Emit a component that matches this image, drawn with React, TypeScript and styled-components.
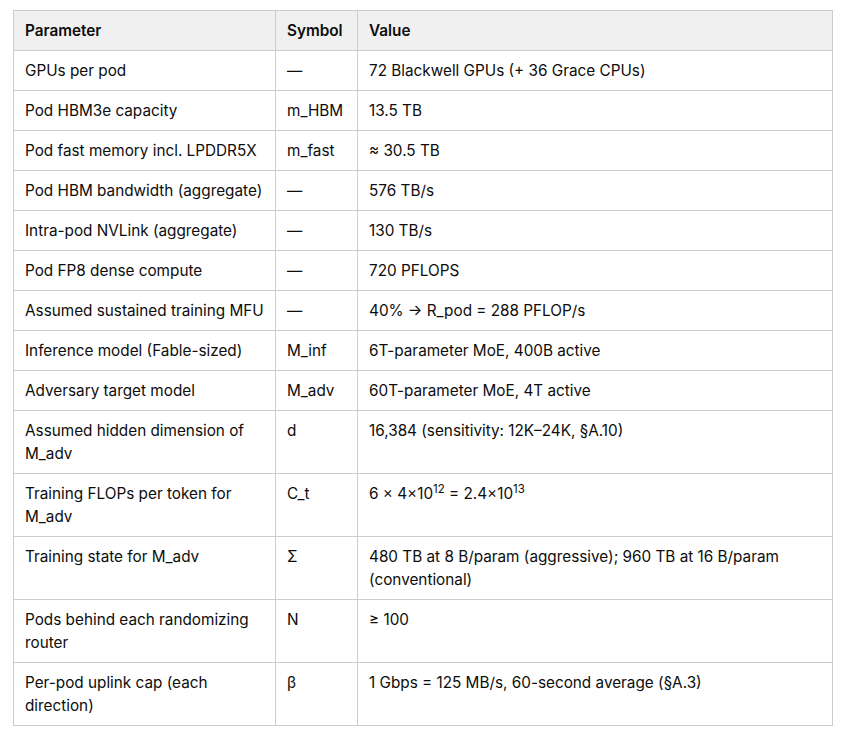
import styled, { createGlobalStyle } from "styled-components";

const GlobalStyle = createGlobalStyle`
  body {
    margin: 0;
    background: #ffffff;
    font-family: Inter, "Noto Sans", "Liberation Sans", sans-serif;
    color: #0d0d0d;
  }
`;

type Row = { param: string; symbol: string; value: React.ReactNode };

const rows: Row[] = [
  { param: "GPUs per pod", symbol: "—", value: "72 Blackwell GPUs (+ 36 Grace CPUs)" },
  { param: "Pod HBM3e capacity", symbol: "m_HBM", value: "13.5 TB" },
  { param: "Pod fast memory incl. LPDDR5X", symbol: "m_fast", value: "≈ 30.5 TB" },
  { param: "Pod HBM bandwidth (aggregate)", symbol: "—", value: "576 TB/s" },
  { param: "Intra-pod NVLink (aggregate)", symbol: "—", value: "130 TB/s" },
  { param: "Pod FP8 dense compute", symbol: "—", value: "720 PFLOPS" },
  { param: "Assumed sustained training MFU", symbol: "—", value: "40% → R_pod = 288 PFLOP/s" },
  { param: "Inference model (Fable-sized)", symbol: "M_inf", value: "6T-parameter MoE, 400B active" },
  { param: "Adversary target model", symbol: "M_adv", value: "60T-parameter MoE, 4T active" },
  {
    param: "Assumed hidden dimension of M_adv",
    symbol: "d",
    value: "16,384 (sensitivity: 12K–24K, §A.10)",
  },
  {
    param: "Training FLOPs per token for M_adv",
    symbol: "C_t",
    value: (
      <>
        6 × 4×10<sup>12</sup> = 2.4×10<sup>13</sup>
      </>
    ),
  },
  {
    param: "Training state for M_adv",
    symbol: "Σ",
    value: "480 TB at 8 B/param (aggressive); 960 TB at 16 B/param (conventional)",
  },
  { param: "Pods behind each randomizing router", symbol: "N", value: "≥ 100" },
  {
    param: "Per-pod uplink cap (each direction)",
    symbol: "β",
    value: "1 Gbps = 125 MB/s, 60-second average (§A.3)",
  },
];

export default function App() {
  return (
    <>
      <GlobalStyle />
      <Page>
        <Table>
          <colgroup>
            <col style={{ width: 262 }} />
            <col style={{ width: 82 }} />
            <col />
          </colgroup>
          <thead>
            <tr>
              <HeadCell>Parameter</HeadCell>
              <HeadCell>Symbol</HeadCell>
              <HeadCell>Value</HeadCell>
            </tr>
          </thead>
          <tbody>
            {rows.map((r) => (
              <tr key={r.param}>
                <Cell>{r.param}</Cell>
                <Cell>{r.symbol}</Cell>
                <Cell>{r.value}</Cell>
              </tr>
            ))}
          </tbody>
        </Table>
      </Page>
    </>
  );
}

const Page = styled.div`
  padding: 10px 0 0 13px;
`;

const Table = styled.table`
  width: 820px;
  table-layout: fixed;
  border-collapse: collapse;
  font-size: 15.3px;
  line-height: 23px;

  sup {
    font-size: 0.75em;
    line-height: 0;
    vertical-align: 0.5em;
  }
`;

const HeadCell = styled.th`
  background: #f0f0f0;
  border: 1px solid #cccccc;
  padding: 8px 11px;
  text-align: left;
  vertical-align: top;
  font-weight: 600;
`;

const Cell = styled.td`
  border: 1px solid #cccccc;
  padding: 8px 11px;
  text-align: left;
  vertical-align: top;
  font-weight: 400;
`;
